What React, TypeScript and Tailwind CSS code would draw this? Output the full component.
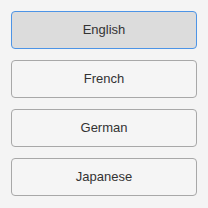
import React from "react";

const langs = ["English", "French", "German", "Japanese"];

export default function App() {
  return (
    <div className="w-[208px] h-[208px] bg-[#f4f4f4] p-[11px] flex flex-col gap-[11px]" style={{ fontFamily: '"Liberation Sans", Arial, sans-serif' }}>
      {langs.map((l, i) => (
        <button
          key={l}
          className={
            i === 0
              ? "h-[38px] w-full rounded-[4px] border border-[#4d94e6] bg-[#dcdcdc] text-[13px] text-[#333333] flex items-center justify-center"
              : "h-[38px] w-full rounded-[4px] border border-[#a8a8a8] bg-[#f5f5f5] text-[13px] text-[#333333] flex items-center justify-center"
          }
        >
          {l}
        </button>
      ))}
    </div>
  );
}
